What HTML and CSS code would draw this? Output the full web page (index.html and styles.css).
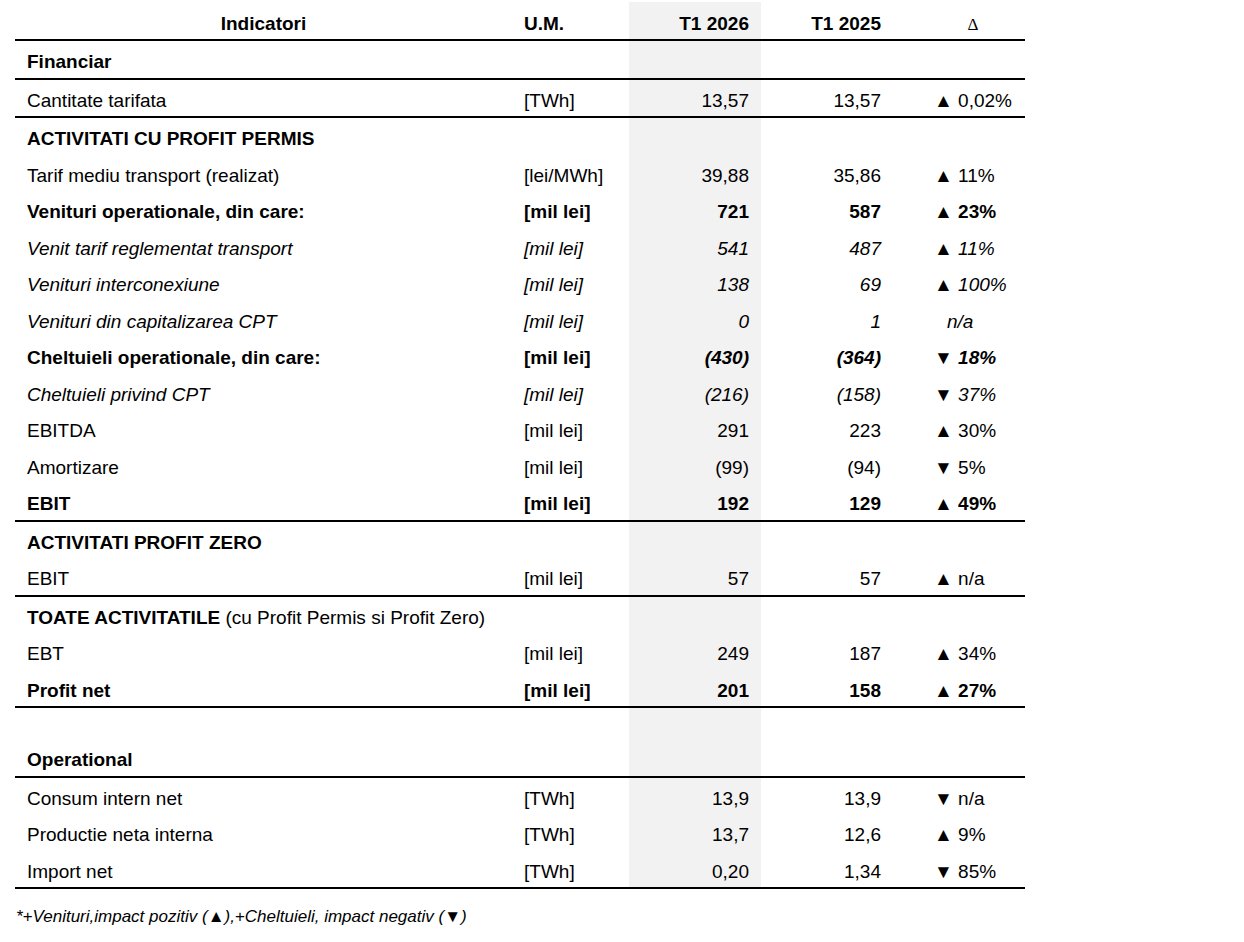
FILE: index.html
```html
<!DOCTYPE html>
<html lang="ro">
<head>
    <meta charset="UTF-8">
    <meta name="viewport" content="width=device-width, initial-scale=1.0">
    <title>Indicatori T1 2026</title>
    <link rel="stylesheet" href="styles.css">
</head>
<body>
    <div class="report">
        <table class="kpi-table">
            <colgroup>
                <col class="col-label">
                <col class="col-um">
                <col class="col-cur">
                <col class="col-prev">
                <col class="col-delta">
            </colgroup>
            <thead>
                <tr class="line">
                    <th class="label center">Indicatori</th>
                    <th class="um">U.M.</th>
                    <th class="cur">T1 2026</th>
                    <th class="prev">T1 2025</th>
                    <th class="delta center"><span class="delta-sign">&Delta;</span></th>
                </tr>
            </thead>
            <tbody>
                <tr class="section line">
                    <td class="label">Financiar</td><td></td><td class="cur"></td><td></td><td></td>
                </tr>
                <tr class="line">
                    <td class="label">Cantitate tarifata</td><td class="um">[TWh]</td><td class="cur">13,57</td><td class="prev">13,57</td><td class="delta"><span class="arrow">&#9650;</span> 0,02%</td>
                </tr>

                <tr class="section">
                    <td class="label">ACTIVITATI CU PROFIT PERMIS</td><td></td><td class="cur"></td><td></td><td></td>
                </tr>
                <tr>
                    <td class="label">Tarif mediu transport (realizat)</td><td class="um">[lei/MWh]</td><td class="cur">39,88</td><td class="prev">35,86</td><td class="delta"><span class="arrow">&#9650;</span> 11%</td>
                </tr>
                <tr class="bold">
                    <td class="label">Venituri operationale, din care:</td><td class="um">[mil lei]</td><td class="cur">721</td><td class="prev">587</td><td class="delta"><span class="arrow">&#9650;</span> 23%</td>
                </tr>
                <tr class="sub">
                    <td class="label">Venit tarif reglementat transport</td><td class="um">[mil lei]</td><td class="cur">541</td><td class="prev">487</td><td class="delta"><span class="arrow">&#9650;</span> 11%</td>
                </tr>
                <tr class="sub">
                    <td class="label">Venituri interconexiune</td><td class="um">[mil lei]</td><td class="cur">138</td><td class="prev">69</td><td class="delta"><span class="arrow">&#9650;</span> 100%</td>
                </tr>
                <tr class="sub">
                    <td class="label">Venituri din capitalizarea CPT</td><td class="um">[mil lei]</td><td class="cur">0</td><td class="prev">1</td><td class="delta na">n/a</td>
                </tr>
                <tr class="bold">
                    <td class="label">Cheltuieli operationale, din care:</td><td class="um">[mil lei]</td><td class="cur it">(430)</td><td class="prev it">(364)</td><td class="delta it"><span class="arrow">&#9660;</span> 18%</td>
                </tr>
                <tr class="sub">
                    <td class="label">Cheltuieli privind CPT</td><td class="um">[mil lei]</td><td class="cur">(216)</td><td class="prev">(158)</td><td class="delta"><span class="arrow">&#9660;</span> 37%</td>
                </tr>
                <tr>
                    <td class="label">EBITDA</td><td class="um">[mil lei]</td><td class="cur">291</td><td class="prev">223</td><td class="delta"><span class="arrow">&#9650;</span> 30%</td>
                </tr>
                <tr>
                    <td class="label">Amortizare</td><td class="um">[mil lei]</td><td class="cur">(99)</td><td class="prev">(94)</td><td class="delta"><span class="arrow">&#9660;</span> 5%</td>
                </tr>
                <tr class="bold line">
                    <td class="label">EBIT</td><td class="um">[mil lei]</td><td class="cur">192</td><td class="prev">129</td><td class="delta"><span class="arrow">&#9650;</span> 49%</td>
                </tr>

                <tr class="section">
                    <td class="label">ACTIVITATI PROFIT ZERO</td><td></td><td class="cur"></td><td></td><td></td>
                </tr>
                <tr class="line">
                    <td class="label">EBIT</td><td class="um">[mil lei]</td><td class="cur">57</td><td class="prev">57</td><td class="delta"><span class="arrow">&#9650;</span> n/a</td>
                </tr>

                <tr class="section">
                    <td class="label">TOATE ACTIVITATILE <span class="note">(cu Profit Permis si Profit Zero)</span></td><td></td><td class="cur"></td><td></td><td></td>
                </tr>
                <tr>
                    <td class="label">EBT</td><td class="um">[mil lei]</td><td class="cur">249</td><td class="prev">187</td><td class="delta"><span class="arrow">&#9650;</span> 34%</td>
                </tr>
                <tr class="bold line">
                    <td class="label">Profit net</td><td class="um">[mil lei]</td><td class="cur">201</td><td class="prev">158</td><td class="delta"><span class="arrow">&#9650;</span> 27%</td>
                </tr>

                <tr class="spacer">
                    <td></td><td></td><td class="cur"></td><td></td><td></td>
                </tr>
                <tr class="section line">
                    <td class="label">Operational</td><td></td><td class="cur"></td><td></td><td></td>
                </tr>
                <tr>
                    <td class="label">Consum intern net</td><td class="um">[TWh]</td><td class="cur">13,9</td><td class="prev">13,9</td><td class="delta"><span class="arrow">&#9660;</span> n/a</td>
                </tr>
                <tr>
                    <td class="label">Productie neta interna</td><td class="um">[TWh]</td><td class="cur">13,7</td><td class="prev">12,6</td><td class="delta"><span class="arrow">&#9650;</span> 9%</td>
                </tr>
                <tr class="line">
                    <td class="label">Import net</td><td class="um">[TWh]</td><td class="cur">0,20</td><td class="prev">1,34</td><td class="delta"><span class="arrow">&#9660;</span> 85%</td>
                </tr>
            </tbody>
        </table>

        <p class="footnote">*+Venituri,impact pozitiv (&#9650;),+Cheltuieli, impact negativ (&#9660;)</p>
    </div>
</body>
</html>
```

FILE: styles.css
```css
body {
    font-family: "Liberation Sans", Arial, Helvetica, sans-serif;
    color: #000;
    background-color: #fff;
    margin: 0;
    padding: 2px 0 0 15px;
}

.report {
    width: 1010px;
}

.kpi-table {
    width: 1010px;
    border-collapse: separate;
    border-spacing: 0;
    table-layout: fixed;
    font-size: 19px;
}

.col-label { width: 497px; }
.col-um { width: 117px; }
.col-cur { width: 132px; }
.col-prev { width: 160px; }
.col-delta { width: 104px; }

th, td {
    box-sizing: border-box;
    height: 36.5px;
    padding: 5px 0 0 0;
    vertical-align: middle;
    white-space: nowrap;
    line-height: 1;
}

th {
    height: 37px;
    font-weight: bold;
}

.line th,
.line td {
    height: 38.5px;
    border-bottom: 2px solid #000;
}

thead .line th {
    height: 39px;
}

.label {
    padding-left: 12px;
    text-align: left;
}

th.label {
    padding-left: 0;
}

.center {
    text-align: center;
}

.um {
    padding-left: 12px;
    text-align: left;
}

.cur {
    background-color: #f2f2f2;
    padding-right: 12px;
    text-align: right;
}

.prev {
    padding-right: 40px;
    text-align: right;
}

.delta {
    padding-left: 13px;
    text-align: left;
}

th.delta {
    padding-left: 0;
    text-align: center;
}

.delta-sign {
    font-family: "Liberation Serif", "Times New Roman", serif;
    font-weight: normal;
    font-size: 17px;
}

.arrow {
    font-style: normal;
}

.delta.na {
    padding-left: 26px;
}

.section td {
    font-weight: bold;
}

.section .note {
    font-weight: normal;
}

.bold td {
    font-weight: bold;
}

.sub td {
    font-style: italic;
}

.it {
    font-style: italic;
}

.spacer td {
    height: 31px;
}

.footnote {
    margin: 18px 0 0 1px;
    font-size: 17px;
    font-style: italic;
}
```
